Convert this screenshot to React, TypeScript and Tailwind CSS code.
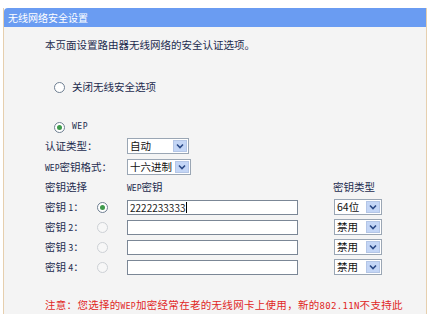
const font = { fontFamily: '"Noto Sans CJK SC", "Noto Sans", sans-serif' }
const mono = { fontFamily: '"DejaVu Sans Mono", monospace' }

function Radio({ checked = false, disabled = false }: { checked?: boolean; disabled?: boolean }) {
  return (
    <span
      className={`flex items-center justify-center w-[11px] h-[11px] rounded-full border ${
        disabled ? 'border-[#cdd1d6] bg-[#f7f7f7]' : 'border-[#6f7f92] bg-white'
      }`}
    >
      {checked && <span className="w-[5px] h-[5px] rounded-full bg-[#3f9a4c]" />}
    </span>
  )
}

function Select({ value, width }: { value: string; width: string }) {
  return (
    <div className={`flex items-stretch h-[16px] border border-[#9aa6b4] bg-white ${width}`}>
      <span className="flex-1 pl-[2px] text-[10.5px] leading-[14px] text-[#111]">{value}</span>
      <span className="flex items-center justify-center w-[14px] m-[1px] bg-[#c4d6f6] border border-[#b4c6e6]">
        <svg width="8" height="6" viewBox="0 0 8 6">
          <path d="M1 1.5 L4 4.5 L7 1.5" fill="none" stroke="#2b4a86" strokeWidth="1.6" />
        </svg>
      </span>
    </div>
  )
}

const keys = [
  { n: '1', value: '2222233333', type: '64位', on: true },
  { n: '2', value: '', type: '禁用', on: false },
  { n: '3', value: '', type: '禁用', on: false },
  { n: '4', value: '', type: '禁用', on: false },
]

export default function App() {
  return (
    <div className="w-[440px] h-[314px] bg-white overflow-hidden pt-[8px] pl-[3px]" style={font}>
      <div className="w-[424px] h-[306px] flex flex-col border-l border-r border-[#e6cfae]">
        <div className="h-[19px] bg-[#6a9cf2] rounded-tl-[4px] px-[4px] text-[10px] leading-[19px] text-white">
          无线网络安全设置
        </div>
        <div className="flex-1 bg-[#f4f4f4] pl-[41px] text-[10.5px] text-[#1c2b4e]">
          <div className="h-[14px] leading-[14px] mt-[11px]">本页面设置路由器无线网络的安全认证选项。</div>

          <div className="flex items-center h-[14px] mt-[28px] pl-[9px] gap-[7px]">
            <Radio />
            <span>关闭无线安全选项</span>
          </div>

          <div className="flex items-center h-[14px] mt-[26px] pl-[9px] gap-[7px]">
            <Radio checked />
            <span className="text-[8px] tracking-[0.5px]" style={mono}>
              WEP
            </span>
          </div>

          <div className="flex items-center h-[20px] mt-[2px]">
            <span className="w-[82px]">认证类型：</span>
            <Select value="自动" width="w-[62px]" />
          </div>

          <div className="flex items-center h-[20px] mt-[1px]">
            <span className="w-[82px]">
              <span className="text-[8px]" style={mono}>WEP</span>密钥格式：
            </span>
            <Select value="十六进制" width="w-[64px]" />
          </div>

          <div className="flex items-center h-[20px]">
            <span className="w-[82px]">密钥选择</span>
            <span className="w-[206px]">
              <span className="text-[8px]" style={mono}>WEP</span>密钥
            </span>
            <span>密钥类型</span>
          </div>

          {keys.map((k) => (
            <div key={k.n} className="flex items-center h-[20px]">
              <span className="w-[52px]">
                密钥 <span className="text-[9px]">{k.n}</span>：
              </span>
              <span className="w-[30px] flex">
                <Radio checked={k.on} disabled={!k.on} />
              </span>
              <div className="w-[171px] h-[15px] border border-[#7b8796] bg-white pl-[2px] text-[10px] leading-[13px] text-[#222] flex items-center">
                {k.value}
                {k.on && <span className="w-px h-[11px] bg-black" />}
              </div>
              <span className="w-[36px]" />
              <Select value={k.type} width="w-[48px]" />
            </div>
          ))}

          <div className="h-[14px] leading-[14px] mt-[21px] text-[10.5px] tracking-[0.3px] text-[#e0261f] whitespace-nowrap">
            {'注意：您选择的'}
            <span className="text-[8px]" style={mono}>WEP</span>
            {'加密经常在老的无线网卡上使用，新的'}
            <span className="text-[9px]" style={mono}>802.11N</span>
            {'不支持此'}
          </div>
        </div>
      </div>
    </div>
  )
}
